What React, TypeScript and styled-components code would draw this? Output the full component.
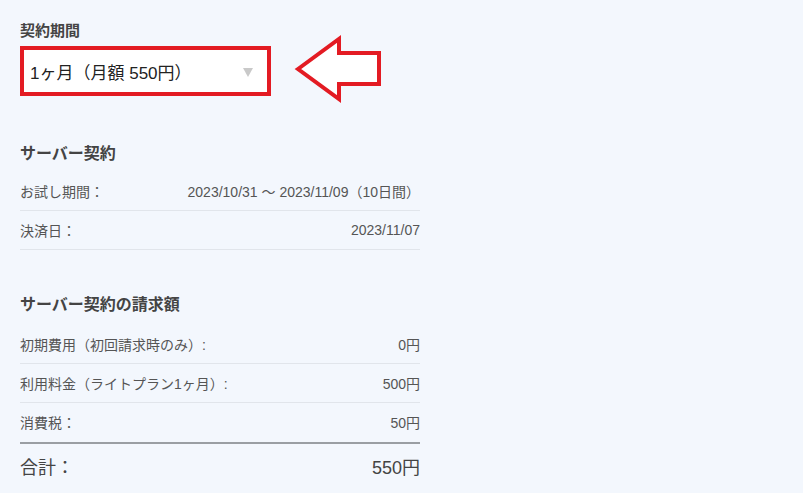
import React from "react";
import styled, { createGlobalStyle } from "styled-components";

const GlobalStyle = createGlobalStyle`
  html, body {
    margin: 0;
    padding: 0;
    background: #f3f7fd;
  }
  body {
    font-family: "Liberation Sans", "Noto Sans CJK JP", sans-serif;
    color: #555;
  }
`;

const Page = styled.div`
  width: 400px;
  padding: 18px 20px 20px;
`;

const Section = styled.section<{ $gap?: number }>`
  margin-top: ${({ $gap }) => $gap ?? 0}px;
`;

const Heading = styled.h2<{ $size?: number; $after?: number }>`
  margin: 0 0 ${({ $after }) => $after ?? 10}px;
  height: 22px;
  display: flex;
  align-items: center;
  font-size: ${({ $size }) => $size ?? 16}px;
  font-weight: bold;
  color: #444;
`;

const SelectRow = styled.div`
  display: flex;
  align-items: center;
  gap: 23px;
  height: 50px;
`;

const SelectBox = styled.div`
  box-sizing: border-box;
  width: 251px;
  height: 50px;
  border: 4px solid #e31b23;
  background: #fff;
  display: flex;
  align-items: center;
  justify-content: space-between;
  padding: 0 14px 0 6px;
  font-size: 17px;
  color: #222;
`;

const Caret = styled.span`
  width: 0;
  height: 0;
  border-left: 5px solid transparent;
  border-right: 5px solid transparent;
  border-top: 9px solid #c9c9c9;
  margin-top: 2px;
`;

const ArrowSvg = styled.svg`
  flex: none;
  margin: -11px 0 -7px;
`;

const Row = styled.div<{ $strong?: boolean; $plain?: boolean }>`
  box-sizing: border-box;
  height: ${({ $strong }) => ($strong ? 44 : 39)}px;
  display: flex;
  justify-content: space-between;
  align-items: center;
  font-size: ${({ $strong }) => ($strong ? 18 : 14)}px;
  color: ${({ $strong }) => ($strong ? "#444" : "#555")};
  border-bottom: 1px solid
    ${({ $plain }) => ($plain ? "transparent" : "#e1e5eb")};
`;

const Divider = styled.hr`
  margin: 0;
  border: none;
  border-top: 2px solid #9a9ea3;
`;

const Arrow = () => (
  <ArrowSvg width="90" height="68" viewBox="0 0 90 68">
    <polygon
      points="4,34 45,4 45,18 85,18 85,49 45,49 45,64"
      fill="#fff"
      stroke="#e31b23"
      strokeWidth="4"
    />
  </ArrowSvg>
);

export default function App() {
  return (
    <Page>
      <GlobalStyle />
      <Section>
        <Heading $size={15} $after={6}>契約期間</Heading>
        <SelectRow>
          <SelectBox>
            <span>1ヶ月（月額 550円）</span>
            <Caret />
          </SelectBox>
          <Arrow />
        </SelectRow>
      </Section>

      <Section $gap={45}>
        <Heading $after={9}>サーバー契約</Heading>
        <Row>
          <span>お試し期間：</span>
          <span>2023/10/31 〜 2023/11/09（10日間）</span>
        </Row>
        <Row>
          <span>決済日：</span>
          <span>2023/11/07</span>
        </Row>
      </Section>

      <Section $gap={42}>
        <Heading $after={11}>サーバー契約の請求額</Heading>
        <Row>
          <span>初期費用（初回請求時のみ）:</span>
          <span>0円</span>
        </Row>
        <Row>
          <span>利用料金（ライトプラン1ヶ月）:</span>
          <span>500円</span>
        </Row>
        <Row $plain>
          <span>消費税：</span>
          <span>50円</span>
        </Row>
        <Divider />
        <Row $strong $plain>
          <span>合計：</span>
          <span>550円</span>
        </Row>
      </Section>
    </Page>
  );
}
